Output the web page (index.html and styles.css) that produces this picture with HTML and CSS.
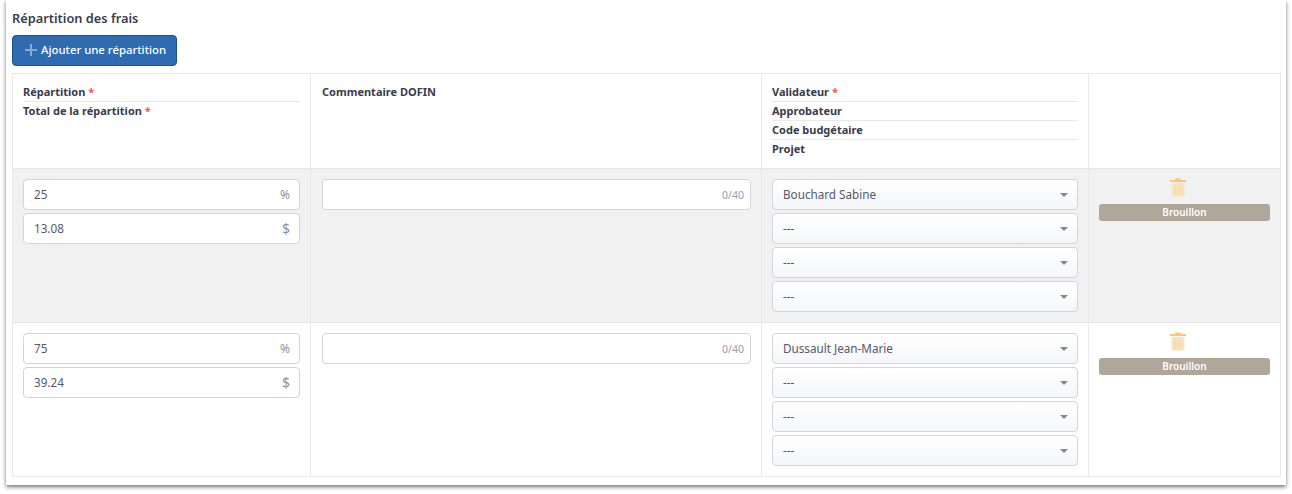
FILE: index.html
```html
<!DOCTYPE html>
<html lang="fr">
<head>
<meta charset="utf-8">
<title>Répartition des frais</title>
<link rel="stylesheet" href="styles.css">
</head>
<body>
<section class="panel">
  <h2 class="title">Répartition des frais</h2>
  <button class="add-btn" type="button">
    <svg class="plus" viewBox="0 0 12 12" width="12" height="12"><path d="M6 0v12M0 6h12" stroke="#8fa9cc" stroke-width="2" fill="none"/></svg>
    <span>Ajouter une répartition</span>
  </button>
  <div class="table">
    <div class="row head">
      <div class="cell">
        <div class="hl">Répartition <span class="req">*</span></div>
        <div class="hl">Total de la répartition <span class="req">*</span></div>
      </div>
      <div class="cell"><div class="hl">Commentaire DOFIN</div></div>
      <div class="cell">
        <div class="hl">Validateur <span class="req">*</span></div>
        <div class="hl">Approbateur</div>
        <div class="hl">Code budgétaire</div>
        <div class="hl">Projet</div>
      </div>
      <div class="cell"></div>
    </div>
    <div class="row shaded">
      <div class="cell stack">
        <div class="field"><span>25</span><span class="unit">%</span></div>
        <div class="field"><span>13.08</span><span class="unit dollar">$</span></div>
      </div>
      <div class="cell stack">
        <div class="field"><span></span><span class="count">0/40</span></div>
      </div>
      <div class="cell stack">
        <div class="select"><span>Bouchard Sabine</span><i class="caret"></i></div>
        <div class="select"><span>---</span><i class="caret"></i></div>
        <div class="select"><span>---</span><i class="caret"></i></div>
        <div class="select"><span>---</span><i class="caret"></i></div>
      </div>
      <div class="cell actions">
        <svg class="trash" viewBox="0 0 18 20" width="18" height="20"><path d="M6.500 1.500h5l.7 1.500H17v2H1V3h4.800z" fill="#fbc770"/><path d="M2.500 6h13v12a1.500 1.500 0 0 1-1.500 1.500H4A1.500 1.500 0 0 1 2.500 18z" fill="#f8e3c2"/><path d="M6 8v9.500M9 8v9.500M12 8v9.500" stroke="#fbd79c" stroke-width="1.200"/></svg>
        <div class="badge">Brouillon</div>
      </div>
    </div>
    <div class="row">
      <div class="cell stack">
        <div class="field"><span>75</span><span class="unit">%</span></div>
        <div class="field"><span>39.24</span><span class="unit dollar">$</span></div>
      </div>
      <div class="cell stack">
        <div class="field"><span></span><span class="count">0/40</span></div>
      </div>
      <div class="cell stack">
        <div class="select"><span>Dussault Jean-Marie</span><i class="caret"></i></div>
        <div class="select"><span>---</span><i class="caret"></i></div>
        <div class="select"><span>---</span><i class="caret"></i></div>
        <div class="select"><span>---</span><i class="caret"></i></div>
      </div>
      <div class="cell actions">
        <svg class="trash" viewBox="0 0 18 20" width="18" height="20"><path d="M6.500 1.500h5l.7 1.500H17v2H1V3h4.800z" fill="#fbc770"/><path d="M2.500 6h13v12a1.500 1.500 0 0 1-1.500 1.500H4A1.500 1.500 0 0 1 2.500 18z" fill="#f8e3c2"/><path d="M6 8v9.500M9 8v9.500M12 8v9.500" stroke="#fbd79c" stroke-width="1.200"/></svg>
        <div class="badge">Brouillon</div>
      </div>
    </div>
  </div>
</section>
</body>
</html>
```
FILE: styles.css
```css
* { box-sizing: border-box; }
html, body { margin: 0; background: #fff; }
body {
  width: 1292px;
  height: 494px;
  overflow: hidden;
  padding: 0 6px;
  font-family: "Noto Sans", "Open Sans", sans-serif;
  color: #3f4254;
}
.panel {
  width: 1280px;
  height: 485px;
  padding: 9px 5px 7px 6px;
  background: #fff;
  box-shadow: 0 2px 4px rgba(0, 0, 0, .55);
}
.title {
  margin: 0 0 8px;
  font-size: 12.800px;
  line-height: 18px;
  font-weight: 600;
  color: #3a3c4a;
}
.add-btn {
  display: flex;
  align-items: center;
  gap: 4px;
  height: 31px;
  width: 165px;
  padding: 0 0 2px 12px;
  margin-bottom: 7px;
  background: #2f6bb0;
  border: 1px solid #1f4f8c;
  border-radius: 4px;
  color: #fff;
  white-space: nowrap;
  font: 500 11.350px "Noto Sans", sans-serif;
}
.table { border: 1px solid #e9e9ec; width: 1269px; }
.row {
  display: grid;
  grid-template-columns: 297px 451px 327px 1fr;
  height: 154px;
  border-top: 1px solid #e6e6e9;
}
.row.head { height: 94px; border-top: 0; }
.row.shaded { background: #f1f1f1; }
.cell { padding: 10px 10px 0 10px; border-left: 1px solid #e9e9ec; }
.cell:first-child { border-left: 0; }
.cell:nth-child(2) { padding-left: 11px; }
.head .cell { padding-top: 9px; }
.hl {
  height: 19px;
  font-size: 11px;
  line-height: 18px;
  font-weight: 700;
  color: #3a3c4a;
  border-bottom: 1px solid #e9e9ec;
}
.hl:last-child { border-bottom: 0; }
.req { color: #f1564c; }
.stack { display: flex; flex-direction: column; gap: 3px; }
.field, .select {
  display: flex;
  align-items: center;
  justify-content: space-between;
  height: 31px;
  padding: 0 10px 2px;
  background: #fff;
  border: 1px solid #d3d4de;
  border-radius: 4px;
  font-size: 11.700px;
  color: #55586a;
}
.select {
  background: linear-gradient(#ffffff, #f5f6f9);
  padding-right: 9px;
}
.unit { color: #8d90a3; font-size: 12px; margin: 2px -1px 0 0; }
.dollar { font-size: 14px; }
.count { color: #9a9caf; font-size: 10.500px; margin: 2px -4px 0 0; }
.caret {
  width: 0;
  height: 0;
  margin-top: 2px;
  border-left: 4px solid transparent;
  border-right: 4px solid transparent;
  border-top: 4px solid #84869a;
}
.actions {
  display: flex;
  flex-direction: column;
  align-items: center;
  padding-top: 8px;
}
.trash { display: block; margin-right: 14px; }
.badge {
  width: 171px;
  height: 17px;
  margin-top: 7px;
  border-radius: 3px;
  background: #b0a69a;
  color: #fff;
  font-size: 10px;
  font-weight: 600;
  line-height: 17px;
  text-align: center;
}
```
